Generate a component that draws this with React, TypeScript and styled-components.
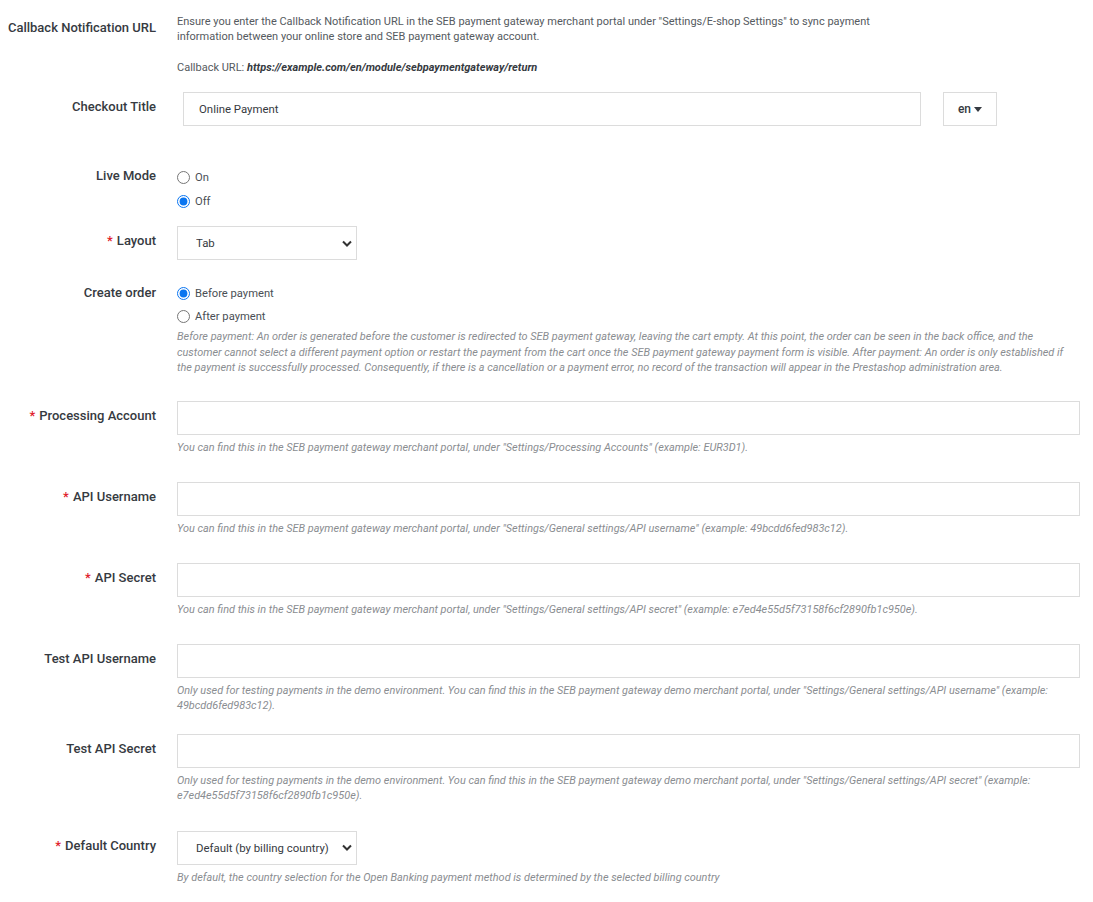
import styled, { createGlobalStyle } from 'styled-components'

const GlobalStyle = createGlobalStyle`
  body {
    margin: 0;
    background: #ffffff;
    font-family: Roboto, "Liberation Sans", sans-serif;
    color: #363a41;
  }
`

const Form = styled.form`
  padding: 12px 13px 20px 0;
`

const FormGroup = styled.div<{ $space?: number }>`
  display: grid;
  grid-template-columns: 156px 1fr;
  column-gap: 21px;
  margin-top: ${({ $space }) => $space ?? 0}px;
`

const Label = styled.label<{ $top?: number }>`
  text-align: right;
  font-size: 13px;
  font-weight: 500;
  line-height: 17px;
  padding-top: ${({ $top }) => $top ?? 6}px;
  color: #363a41;
`

const Required = styled.span`
  color: #e0202b;
  margin-right: 4px;
`

const Controls = styled.div`
  display: flex;
  flex-direction: column;
  min-width: 0;
`

const InfoText = styled.p`
  margin: 0;
  padding-top: 2px;
  font-size: 11px;
  line-height: 15px;
  color: #555a60;
  max-width: 705px;
  & + & {
    margin-top: 14px;
  }
  strong {
    font-weight: 700;
    font-style: italic;
    color: #363a41;
  }
`

const TextInput = styled.input`
  box-sizing: border-box;
  width: 100%;
  height: 34px;
  border: 1px solid #dcdcdc;
  border-radius: 0;
  padding: 0 15px;
  font-family: inherit;
  font-size: 11.4px;
  color: #363a41;
  outline: none;
`

const Translatable = styled.div`
  display: grid;
  grid-template-columns: 1fr 54px;
  column-gap: 22px;
  padding: 0 83px 0 6px;
`

const LangButton = styled.button`
  box-sizing: border-box;
  height: 34px;
  border: 1px solid #dcdcdc;
  background: #ffffff;
  font-family: inherit;
  font-size: 12px;
  font-weight: 500;
  color: #363a41;
  display: flex;
  align-items: center;
  justify-content: center;
  gap: 3px;
  padding: 0;
`

const Select = styled.select`
  box-sizing: border-box;
  width: 180px;
  height: 34px;
  appearance: none;
  border: 1px solid #dcdcdc;
  border-radius: 0;
  padding: 0 24px 0 18px;
  font-family: inherit;
  font-size: 11.4px;
  color: #363a41;
  background: #ffffff url("data:image/svg+xml,%3Csvg xmlns='http://www.w3.org/2000/svg' width='10' height='7' viewBox='0 0 10 7'%3E%3Cpath d='M1 1.5l4 4 4-4' fill='none' stroke='%23333' stroke-width='2'/%3E%3C/svg%3E") no-repeat right 4px center;
`

const RadioList = styled.div<{ $step: number }>`
  display: flex;
  flex-direction: column;
  padding-top: 4px;
  label {
    height: ${({ $step }) => $step}px;
  }
`

const RadioLabel = styled.label`
  display: flex;
  align-items: center;
  font-size: 11.2px;
  color: #4a4f55;
  input {
    width: 13px;
    height: 13px;
    margin: 0 5px 0 0;
    accent-color: #0a75f0;
  }
`

const Help = styled.p<{ $lead?: number; $line?: number }>`
  margin: ${({ $lead }) => $lead ?? 5}px 0 0;
  min-height: 21px;
  font-size: 10.9px;
  line-height: ${({ $line }) => $line ?? 15}px;
  font-style: italic;
  color: #8a8d91;
`

const Caret = () => (
  <svg width="8" height="5" viewBox="0 0 8 5">
    <path d="M0 0h8L4 5z" fill="#363a41" />
  </svg>
)

type FieldProps = {
  label: string
  required?: boolean
  help?: string
  space?: number
}

const TextField = ({ label, required, help, space = 21 }: FieldProps) => (
  <FormGroup $space={space}>
    <Label>
      {required && <Required>*</Required>}
      {label}
    </Label>
    <Controls>
      <TextInput type="text" />
      {help && <Help>{help}</Help>}
    </Controls>
  </FormGroup>
)

const App = () => {
  return (
    <>
      <GlobalStyle />
      <Form>
        <FormGroup>
          <Label $top={7}>Callback Notification URL</Label>
          <Controls>
            <InfoText>
              Ensure you enter the Callback Notification URL in the SEB payment gateway merchant
              portal under "Settings/E-shop Settings" to sync payment information between your
              online store and SEB payment gateway account.
            </InfoText>
            <InfoText>
              Callback URL: <strong>https://example.com/en/module/sebpaymentgateway/return</strong>
            </InfoText>
          </Controls>
        </FormGroup>

        <FormGroup $space={17}>
          <Label>Checkout Title</Label>
          <Translatable>
            <TextInput type="text" defaultValue="Online Payment" />
            <LangButton type="button">
              en <Caret />
            </LangButton>
          </Translatable>
        </FormGroup>

        <FormGroup $space={35}>
          <Label>Live Mode</Label>
          <RadioList $step={24}>
            <RadioLabel>
              <input type="radio" name="live" /> On
            </RadioLabel>
            <RadioLabel>
              <input type="radio" name="live" defaultChecked /> Off
            </RadioLabel>
          </RadioList>
        </FormGroup>

        <FormGroup $space={13}>
          <Label>
            <Required>*</Required>Layout
          </Label>
          <Controls>
            <Select defaultValue="tab">
              <option value="tab">Tab</option>
              <option value="list">List</option>
            </Select>
          </Controls>
        </FormGroup>

        <FormGroup $space={18}>
          <Label>Create order</Label>
          <Controls>
            <RadioList $step={23}>
              <RadioLabel>
                <input type="radio" name="order" defaultChecked /> Before payment
              </RadioLabel>
              <RadioLabel>
                <input type="radio" name="order" /> After payment
              </RadioLabel>
            </RadioList>
            <Help $lead={1} $line={15.5}>
              Before payment: An order is generated before the customer is redirected to SEB payment
              gateway, leaving the cart empty. At this point, the order can be seen in the back
              office, and the customer cannot select a different payment option or restart the
              payment from the cart once the SEB payment gateway payment form is visible. After
              payment: An order is only established if the payment is successfully processed.
              Consequently, if there is a cancellation or a payment error, no record of the
              transaction will appear in the Prestashop administration area.
            </Help>
          </Controls>
        </FormGroup>

        <TextField
          space={25}
          required
          label="Processing Account"
          help={`You can find this in the SEB payment gateway merchant portal, under "Settings/Processing Accounts" (example: EUR3D1).`}
        />
        <TextField
          required
          label="API Username"
          help={`You can find this in the SEB payment gateway merchant portal, under "Settings/General settings/API username" (example: 49bcdd6fed983c12).`}
        />
        <TextField
          required
          label="API Secret"
          help={`You can find this in the SEB payment gateway merchant portal, under "Settings/General settings/API secret" (example: e7ed4e55d5f73158f6cf2890fb1c950e).`}
        />
        <TextField
          label="Test API Username"
          help={`Only used for testing payments in the demo environment. You can find this in the SEB payment gateway demo merchant portal, under "Settings/General settings/API username" (example: 49bcdd6fed983c12).`}
        />
        <TextField
          label="Test API Secret"
          help={`Only used for testing payments in the demo environment. You can find this in the SEB payment gateway demo merchant portal, under "Settings/General settings/API secret" (example: e7ed4e55d5f73158f6cf2890fb1c950e).`}
        />

        <FormGroup $space={28}>
          <Label>
            <Required>*</Required>Default Country
          </Label>
          <Controls>
            <Select defaultValue="default">
              <option value="default">Default (by billing country)</option>
            </Select>
            <Help>
              By default, the country selection for the Open Banking payment method is determined by
              the selected billing country
            </Help>
          </Controls>
        </FormGroup>
      </Form>
    </>
  )
}

export default App
